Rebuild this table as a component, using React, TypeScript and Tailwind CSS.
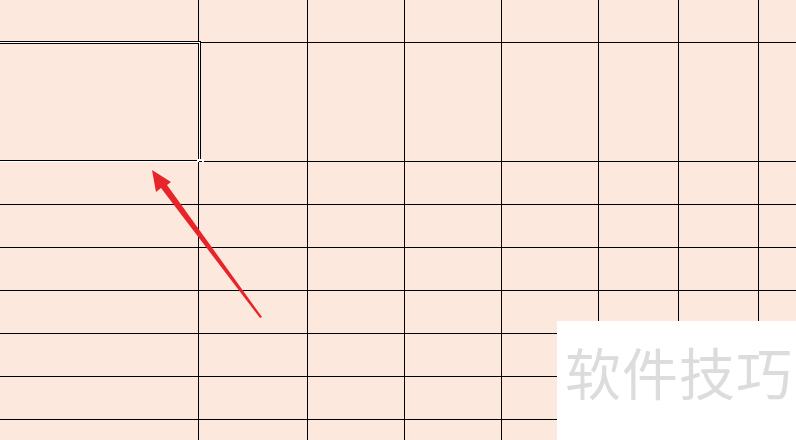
const cols = [199, 109, 97, 97, 97, 80, 80, 37];
const rows = [43, 119, 43, 43, 43, 43, 43, 43, 21];

function Cell({ w, h, last }: { w: number; h: number; last: boolean }) {
  return (
    <div
      className={`shrink-0 bg-[#fce8dc] border-b border-black ${last ? "" : "border-r"}`}
      style={{ width: w, height: h }}
    />
  );
}

export default function App() {
  return (
    <div className="relative w-[796px] h-[440px] overflow-hidden bg-[#fce8dc]">
      <div className="flex flex-col">
        {rows.map((h, r) => (
          <div key={r} className="relative flex">
            {cols.map((w, c) => (
              <Cell key={c} w={w} h={h} last={c === cols.length - 1} />
            ))}
            {r === 1 && (
              <div className="absolute -left-4 -top-[2px] w-[217px] h-[122px] border border-black shadow-[inset_0_0_0_1px_white,inset_0_0_0_2px_black]">
                <div className="absolute -right-[4px] -bottom-[4px] w-[7px] h-[7px] bg-black border-2 border-white" />
              </div>
            )}
          </div>
        ))}
      </div>

      <svg className="absolute inset-0" width="796" height="440" viewBox="0 0 796 440">
        <polygon
          points="152,170 171,182 167,185 262,317 260,318 161,188 156,192"
          fill="#e8242b"
        />
      </svg>

      <div className="absolute left-[557px] top-[321px] right-0 bottom-0 bg-white pl-[8px] pt-[22px]">
        <span className="text-[56px] leading-none text-[#dcdcdc] font-['Noto_Sans_CJK_SC',sans-serif] tracking-[1px]">
          软件技巧
        </span>
      </div>
    </div>
  );
}
